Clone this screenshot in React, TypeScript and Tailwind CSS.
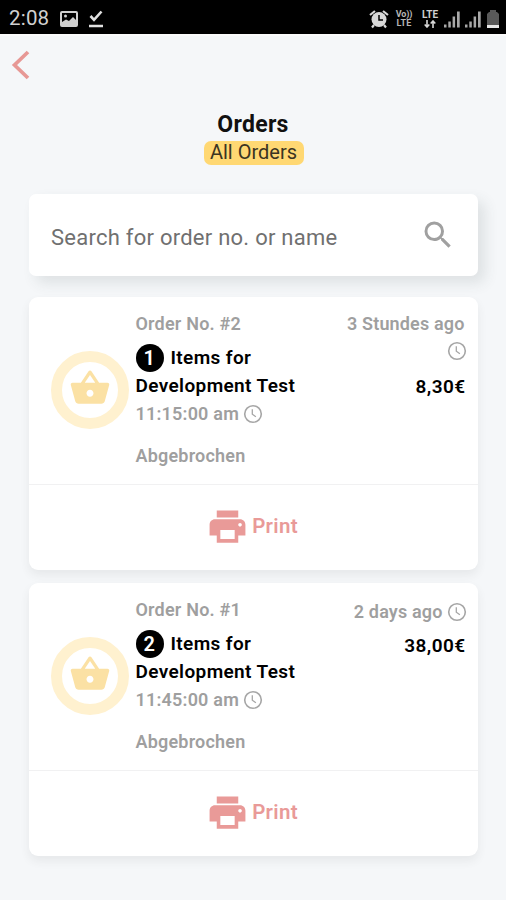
import { MdPrint, MdSearch, MdShoppingBasket } from "react-icons/md";

interface Order {
  id: number;
  age: string;
  ageWraps: boolean;
  count: number;
  total: string;
  time: string;
}

const orders: Order[] = [
  { id: 2, age: "3 Stundes ago", ageWraps: true, count: 1, total: "8,30€", time: "11:15:00 am" },
  { id: 1, age: "2 days ago", ageWraps: false, count: 2, total: "38,00€", time: "11:45:00 am" },
];

const Clock = () => (
  <svg viewBox="0 0 20 20" className="w-5 h-5 shrink-0" fill="none" stroke="#a6a6a6">
    <circle cx="10" cy="10" r="8.3" strokeWidth="1.6" />
    <path d="M9.3 5.2v5l3.6 2.6" strokeWidth="1.3" />
  </svg>
);

const Signal = () => (
  <svg viewBox="0 0 18 18" className="w-[18px] h-[18px]" fill="#a8a8a8">
    <path d="M1 14.500h2.500v3H1zM5.300 11.500h2.500v6H5.300zM9.600 6.500h2.500v11H9.600zM14 1.500h2.700v16H14z" />
  </svg>
);

const StatusBar = () => (
  <div className="h-[34px] bg-black flex items-center justify-between pt-[3px] pl-[9px] pr-[7px] text-[#d0d0d0]">
    <div className="flex items-center">
      <span className="w-[51px] text-[20.5px] leading-none tracking-[0.2px]">2:08</span>
      <svg viewBox="0 0 18 16" className="w-[18px] h-4">
        <rect x="1" y="1" width="16" height="14" rx="1" fill="none" stroke="#d0d0d0" strokeWidth="2" />
        <path d="M2 14v-3l4-2.500 3 1.500 4-4 3 3v5z" fill="#d0d0d0" />
        <circle cx="5.500" cy="5" r="1.500" fill="#d0d0d0" />
      </svg>
      <svg viewBox="0 0 16 18" className="w-4 h-[18px] ml-2.5" fill="none" stroke="#e0e0e0" strokeWidth="2.600">
        <path d="M2.500 6l3.500 3.800L13.500 1.500M1 16h14" />
      </svg>
    </div>
    <div className="flex items-center">
      <svg viewBox="0 0 20 20" className="w-5 h-5">
        <path d="M1 6L6 2M19 6L14 2M5 16l-2 2.500M15 16l2 2.500" stroke="#d8d8d8" strokeWidth="2.200" />
        <circle cx="10" cy="10.500" r="7.500" fill="#d8d8d8" />
        <path d="M10 6v5h4" fill="none" stroke="#000" strokeWidth="1.500" />
      </svg>
      <div className="ml-1.5 w-[18px] text-center text-[9px] leading-[9px] font-bold text-[#b5b5b5]">
        <p className="tracking-[-0.2px]">Vo))</p>
        <p className="tracking-[0.2px]">LTE</p>
      </div>
      <div className="ml-2 mr-px w-[18px] flex flex-col items-center">
        <p className="text-[10px] leading-[10px] font-bold">LTE</p>
        <svg viewBox="0 0 12 8" className="w-3 h-2" fill="none" stroke="#d8d8d8" strokeWidth="1.600">
          <path d="M3 0v7M.7 4.500L3 7l2.300-2.500M9 8V1M6.700 3.500L9 1l2.300 2.500" />
        </svg>
      </div>
      <div className="flex gap-[3px] ml-[3px]">
        <Signal />
        <Signal />
      </div>
      <svg viewBox="0 0 12 18" className="w-3 h-[18px] ml-[5px]">
        <path d="M3 0h6v2h1l2 2v14H0V4l2-2h1z" fill="#595959" />
        <path d="M0 15h12v3H0z" fill="#e8e8e8" />
      </svg>
    </div>
  </div>
);

const OrderCard = ({ order }: { order: Order }) => (
  <section className="h-[272.5px] rounded-[9px] bg-white shadow-[0_5px_10px_rgba(60,70,70,0.08)] text-[18px] font-semibold text-[#9f9f9f]">
    <div className="h-[188px] flex pl-[22px] pr-[11px] border-b border-[#f1f1f2]">
      <div className="mt-[54px] w-[78px] h-[78px] shrink-0 rounded-full border-[11px] border-[#fff1cf] flex items-center justify-center">
        <MdShoppingBasket size={42} className="text-[#fbe1a4] shrink-0 -mt-1" />
      </div>
      <div className="ml-[7px] mt-[13px] w-[176px] shrink-0 whitespace-nowrap leading-7 tracking-[0.2px]">
        <p>Order No. #{order.id}</p>
        <div className="mt-1.5 text-[19px] tracking-[0.38px] text-black">
          <p className="flex items-center">
            <span className="w-7 h-7 mr-[7px] rounded-full bg-black text-[20px] text-white flex items-center justify-center">
              {order.count}
            </span>
            Items for
          </p>
          <p>Development Test</p>
        </div>
        <p className="flex items-center">
          <span className="mr-1">{order.time}</span>
          <Clock />
        </p>
        <p className="mt-[13.5px]">Abgebrochen</p>
      </div>
      <div className="flex-1 mt-[13px] flex flex-col items-end whitespace-nowrap leading-7 tracking-[0.15px]">
        {order.ageWraps ? (
          <>
            <p className="mr-0.5">{order.age}</p>
            <span className="h-7 -mt-px mb-px flex items-center">
              <Clock />
            </span>
          </>
        ) : (
          <p className="mt-0.5 flex items-center">
            <span className="mr-1">{order.age}</span>
            <Clock />
          </p>
        )}
        <p className={`mr-px text-[19px] tracking-[0.4px] text-black ${order.ageWraps ? "mt-[7px]" : "mt-1.5"}`}>
          {order.total}
        </p>
      </div>
    </div>
    <button className="w-full h-[83px] pr-0.5 flex items-center justify-center text-[#e99a98] text-[20.5px] tracking-[0.3px]">
      <MdPrint size={43} className="mr-[3px]" />
      Print
    </button>
  </section>
);

const App = () => (
  <div className="w-[506px] h-[900px] overflow-hidden bg-[#f5f7f9] font-['Roboto',sans-serif]">
    <StatusBar />
    <header className="flex flex-col items-center border-t-2 border-[#fbfbfb]">
      <button className="self-start ml-[11px] mt-[14px]" aria-label="Back">
        <svg viewBox="0 0 20 30" className="w-5 h-[30px]" fill="none" stroke="#e79895" strokeWidth="3.700">
          <path d="M17 2L3.500 15 17 28" />
        </svg>
      </button>
      <h1 className="mt-[31px] text-[23px] leading-7 font-bold tracking-[0.3px] text-[#111]">Orders</h1>
      <p className="mt-0.5 ml-px h-6 w-[100px] rounded-[7px] bg-[#ffd873] text-center text-[20px] leading-[23px] text-[#3b3422]">
        All Orders
      </p>
    </header>
    <main className="px-[28.5px]">
      <div className="mt-[29px] h-[82px] flex items-center justify-between rounded-[7px] bg-white pl-[22.5px] pr-[22px] shadow-[7px_7px_14px_rgba(60,70,70,0.12)]">
        <span className="mt-1.5 text-[22px] leading-7 tracking-[0.25px] text-[#707070]">Search for order no. or name</span>
        <MdSearch size={36} className="text-[#a0a0a0]" />
      </div>
      <div className="mt-[21px] flex flex-col gap-[13.5px]">
        {orders.map((order) => (
          <OrderCard key={order.id} order={order} />
        ))}
      </div>
    </main>
  </div>
);

export default App;
